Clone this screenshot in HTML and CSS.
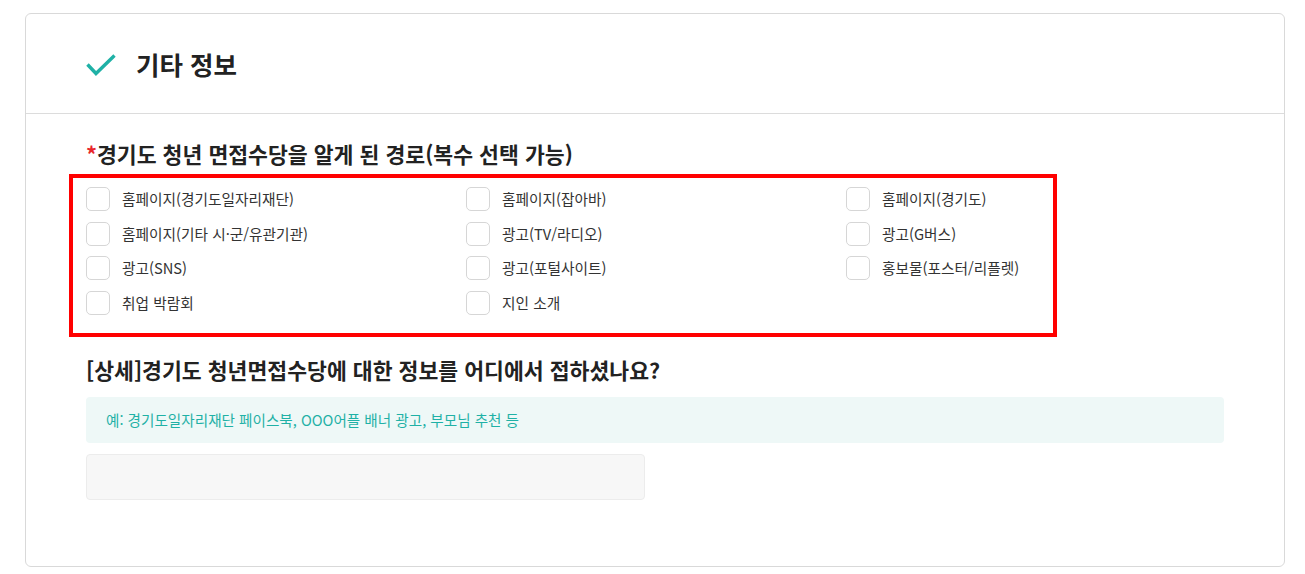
FILE: index.html
```html
<!DOCTYPE html>
<html lang="ko">
<head>
<meta charset="utf-8">
<title>기타 정보</title>
<link rel="stylesheet" href="styles.css">
</head>
<body>
<div class="card">
  <div class="card-head">
    <svg class="check-icon" width="30" height="22" viewBox="0 0 30 22" aria-hidden="true">
      <polyline points="1.5,10.5 10,19.5 28.5,1.5" fill="none" stroke="#1fb1a6" stroke-width="3.4" stroke-linecap="butt" stroke-linejoin="miter"/>
    </svg>
    <h2 class="card-title">기타 정보</h2>
  </div>
  <div class="card-body">
    <div class="q-label"><span class="req">*</span>경기도 청년 면접수당을 알게 된 경로(복수 선택 가능)</div>
    <div class="choice-box">
      <div class="choice-grid">
        <label class="choice"><span class="box"></span><span class="txt">홈페이지(경기도일자리재단)</span></label>
        <label class="choice"><span class="box"></span><span class="txt">홈페이지(잡아바)</span></label>
        <label class="choice"><span class="box"></span><span class="txt">홈페이지(경기도)</span></label>
        <label class="choice"><span class="box"></span><span class="txt">홈페이지(기타 시·군/유관기관)</span></label>
        <label class="choice"><span class="box"></span><span class="txt">광고(TV/라디오)</span></label>
        <label class="choice"><span class="box"></span><span class="txt">광고(G버스)</span></label>
        <label class="choice"><span class="box"></span><span class="txt">광고(SNS)</span></label>
        <label class="choice"><span class="box"></span><span class="txt">광고(포털사이트)</span></label>
        <label class="choice"><span class="box"></span><span class="txt">홍보물(포스터/리플렛)</span></label>
        <label class="choice"><span class="box"></span><span class="txt">취업 박람회</span></label>
        <label class="choice"><span class="box"></span><span class="txt">지인 소개</span></label>
      </div>
    </div>
    <div class="q-label q-second">[상세]경기도 청년면접수당에 대한 정보를 어디에서 접하셨나요?</div>
    <div class="hint">예: 경기도일자리재단 페이스북, OOO어플 배너 광고, 부모님 추천 등</div>
    <div class="input-field"></div>
  </div>
</div>
</body>
</html>
```
FILE: styles.css
```css
html, body {
  margin: 0;
  padding: 0;
  background: #ffffff;
}
body {
  font-family: "Noto Sans CJK KR", "Noto Sans", sans-serif;
  color: #222;
}
.card {
  box-sizing: border-box;
  margin: 13px 0 0 25px;
  width: 1260px;
  height: 554px;
  border: 1px solid #d9d9d9;
  border-radius: 6px;
  background: #fff;
}
.card-head {
  box-sizing: border-box;
  height: 100px;
  border-bottom: 1px solid #dcdcdc;
  display: flex;
  align-items: center;
  padding-left: 60px;
  gap: 20px;
}
.check-icon {
  display: block;
  margin-top: 2px;
}
.card-title {
  margin: 0;
  font-size: 25.5px;
  font-weight: 700;
  line-height: 34px;
  color: #222;
}
.card-body {
  padding: 25px 60px 0 60px;
}
.q-label {
  font-size: 21.6px;
  font-weight: 700;
  line-height: 30px;
  color: #222;
}
.req {
  color: #e8262b;
}
.choice-box {
  box-sizing: border-box;
  width: 988px;
  margin: 5px 0 0 -17px;
  border: 4px solid #ff0000;
  padding: 9px 0 18px 13px;
}
.choice-grid {
  display: grid;
  grid-template-columns: 380px 380px auto;
  row-gap: 10.67px;
}
.choice {
  display: flex;
  align-items: center;
  gap: 12px;
  height: 24px;
}
.box {
  box-sizing: border-box;
  width: 24px;
  height: 24px;
  border: 1px solid #d6d6d6;
  border-radius: 5px;
  background: #fff;
  flex: none;
}
.txt {
  font-size: 14.7px;
  line-height: 20px;
  color: #333;
}
.q-second {
  margin-top: 18px;
}
.hint {
  box-sizing: border-box;
  margin-top: 12px;
  height: 46px;
  background: #eef8f7;
  border-radius: 4px;
  padding-left: 20px;
  display: flex;
  align-items: center;
  font-size: 14.6px;
  color: #1fb1a6;
}
.input-field {
  box-sizing: border-box;
  margin-top: 11px;
  width: 559px;
  height: 46px;
  background: #f7f7f7;
  border: 1px solid #ececec;
  border-radius: 4px;
}
```
